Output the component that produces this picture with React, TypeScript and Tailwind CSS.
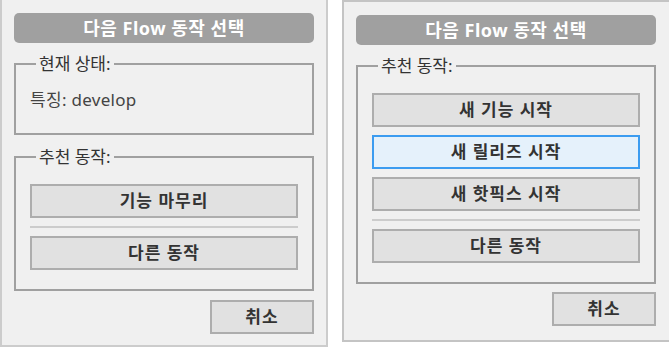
import React from "react";

const font = "font-['Noto_Sans','Noto_Sans_CJK_KR',sans-serif]";

function Btn({ label, focused }: { label: string; focused?: boolean }) {
  return (
    <button
      className={
        focused
          ? "h-[34px] w-full border-2 border-[#3c9cf0] bg-[#e5f1fb] text-[17px] font-bold tracking-[1px] text-[#333]"
          : "h-[34px] w-full border-2 border-[#adadad] bg-[#e1e1e1] text-[17px] font-bold tracking-[1px] text-[#333]"
      }
    >
      {label}
    </button>
  );
}

function Title() {
  return (
    <div className="flex h-[30px] w-[300px] items-center justify-center rounded-[5px] bg-[#a0a0a0] text-[18px] font-bold tracking-[0.5px] text-white">
      다음 Flow 동작 선택
    </div>
  );
}

function Legend({ text }: { text: string }) {
  return (
    <legend className="ml-[6px] px-[3px] text-[17px] leading-[22px] text-[#333]">{text}</legend>
  );
}

function Actions({ items, focusedIndex }: { items: string[]; focusedIndex?: number }) {
  return (
    <fieldset className="w-[300px] border-2 border-[#a0a0a0] px-[14px] pt-[16px] pb-[19px]">
      <Legend text="추천 동작:" />
      <div className="flex flex-col gap-2">
        {items.map((it, i) => (
          <Btn key={it} label={it} focused={i === focusedIndex} />
        ))}
        <div className="h-[2px] bg-[#cccccc]" />
        <Btn label="다른 동작" />
      </div>
    </fieldset>
  );
}

function Cancel() {
  return (
    <div className="flex w-[300px] justify-end">
      <button className="h-[34px] w-[104px] border-2 border-[#adadad] bg-[#e1e1e1] text-[17px] font-bold tracking-[1px] text-[#333]">
        취소
      </button>
    </div>
  );
}

export default function App() {
  return (
    <div className={`flex h-[347px] w-[669px] items-start gap-[14px] overflow-hidden bg-white ${font}`}>
      <div className="mt-[-2px] flex h-[349px] w-[328px] shrink-0 flex-col border-2 border-[#cccccc] bg-[#f0f0f0] px-[12px] pt-[13px]">
        <Title />
        <fieldset className="mt-[10px] w-[300px] border-2 border-[#a0a0a0] px-[14px] pt-[13px] pb-[21px]">
          <Legend text="현재 상태:" />
          <div className="text-[17px] leading-[24px] tracking-[0.3px] text-[#444]">특징: develop</div>
        </fieldset>
        <div className="mt-[11px]">
          <Actions items={["기능 마무리"]} />
        </div>
        <div className="mt-[9px]">
          <Cancel />
        </div>
      </div>
      <div className="flex h-[342px] w-[340px] shrink-0 flex-col border-2 border-r-0 border-[#c4c4c4] bg-[#f0f0f0] px-[12px] pt-[13px]">
        <Title />
        <div className="mt-[10px]">
          <Actions items={["새 기능 시작", "새 릴리즈 시작", "새 핫픽스 시작"]} focusedIndex={1} />
        </div>
        <div className="mt-[8px]">
          <Cancel />
        </div>
      </div>
    </div>
  );
}
